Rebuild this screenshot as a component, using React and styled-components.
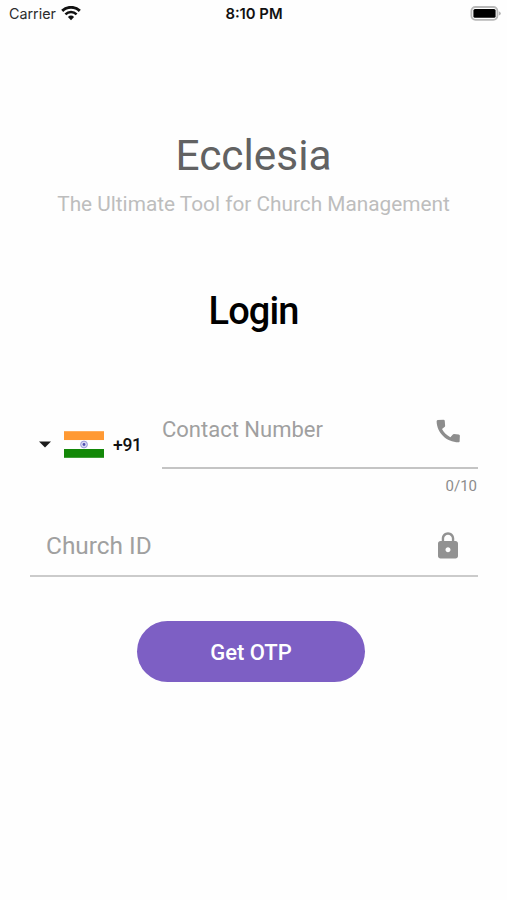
import React from "react";
import styled, { createGlobalStyle } from "styled-components";

export default function App() {
  return (
    <>
      <GlobalStyle />
      <Screen>
        <StatusBar>
          <Carrier>
            <CarrierName>Carrier</CarrierName>
            <WifiIcon />
          </Carrier>
          <Clock>8:10 PM</Clock>
          <BatteryIcon />
        </StatusBar>
        <Title>Ecclesia</Title>
        <Tagline>The Ultimate Tool for Church Management</Tagline>
        <Heading>Login</Heading>
        <Form>
          <PhoneRow>
            <CountryPicker type="button">
              <CaretIcon />
              <IndiaFlag />
              <DialCode>+91</DialCode>
            </CountryPicker>
            <PhoneColumn>
              <PhoneField>
                <Label $size={22}>Contact Number</Label>
                <PhoneIcon />
              </PhoneField>
              <Counter>0/10</Counter>
            </PhoneColumn>
          </PhoneRow>
          <ChurchField>
            <Label $size={24.4}>Church ID</Label>
            <LockIcon />
          </ChurchField>
          <SubmitButton type="button">Get OTP</SubmitButton>
        </Form>
      </Screen>
    </>
  );
}

const WifiIcon = () => (
  <svg width="20" height="15" viewBox="0 0 20 15" fill="none">
    <path d="M1.2 4.9a12.6 12.6 0 0 1 17.6 0" stroke="#111" strokeWidth="2.9" />
    <path d="M4.4 8.4a8 8 0 0 1 11.2 0" stroke="#111" strokeWidth="2.5" />
    <path d="M10 14.2L6.9 11a4.5 4.5 0 0 1 6.2 0z" fill="#111" />
  </svg>
);

const BatteryIcon = () => (
  <svg width="31" height="15" viewBox="0 0 31 15">
    <rect x="1.4" y="1" width="26" height="12.8" rx="4" fill="#fff" stroke="#b8b8b8" strokeWidth="1.8" />
    <rect x="3.4" y="3" width="22.2" height="8.8" rx="1.6" fill="#000" />
    <path d="M28.8 5.2q2 .8 2 2.2t-2 2.2z" fill="#b4b4b4" />
  </svg>
);

const CaretIcon = () => (
  <svg width="12" height="7" viewBox="0 0 12 7">
    <path d="M0 .4h12L6 6.6z" fill="#1c1c1c" />
  </svg>
);

const IndiaFlag = () => (
  <svg width="40" height="27" viewBox="0 0 40 27">
    <rect width="40" height="9" y="0.2" fill="#ff9933" />
    <rect width="40" height="8.8" y="9.2" fill="#fff" />
    <rect width="40" height="8.8" y="18" fill="#138808" />
    <circle cx="20" cy="13.5" r="3.4" fill="#d9d9f4" stroke="#9b9bdc" strokeWidth="1" />
    <circle cx="20" cy="13.5" r="1.4" fill="#5050b0" />
  </svg>
);

const PhoneIcon = () => (
  <svg width="30" height="30" viewBox="0 0 24 24" fill="#8d8d8d">
    <path d="M3.7 3.2L8.4 2.9c.6 0 .9.3 1 .9l.3 3.9c0 .5-.1.8-.5 1.1L7.2 10.4c1.5 3 3.7 5 6.7 6.5l1.8-2c.3-.4.7-.5 1.1-.5l3.8.3c.6.1.9.5.9 1l-.2 4.5c0 .5-.4.8-.9.8C10.8 21 3.1 13.4 2.9 4.2c0-.6.3-.9.8-1z" />
  </svg>
);

const LockIcon = () => (
  <svg width="30" height="30" viewBox="0 0 24 24" fill="#929292">
    <path d="M18 8h-1V6c0-2.76-2.24-5-5-5S7 3.24 7 6v2H6c-1.1 0-2 .9-2 2v10c0 1.1.9 2 2 2h12c1.1 0 2-.9 2-2V10c0-1.1-.9-2-2-2zm-6 9c-1.1 0-2-.9-2-2s.9-2 2-2 2 .9 2 2-.9 2-2 2zm3.1-9H8.9V6c0-1.71 1.39-3.1 3.1-3.1 1.71 0 3.1 1.39 3.1 3.1v2z" />
  </svg>
);

const GlobalStyle = createGlobalStyle`
  * {
    box-sizing: border-box;
  }

  body {
    margin: 0;
    background: #fefefe;
    font-family: Roboto, "Liberation Sans", sans-serif;
  }

  svg {
    display: block;
    flex-shrink: 0;
  }
`;

const Screen = styled.main`
  display: flex;
  flex-direction: column;
  width: 507px;
  height: 900px;
  overflow: hidden;
  white-space: nowrap;
`;

const StatusBar = styled.header`
  display: grid;
  grid-template-columns: 1fr auto 1fr;
  align-items: center;
  height: 26px;
  padding: 0 6px 0 9px;
  font-family: Inter, "Liberation Sans", sans-serif;
  font-size: 14.5px;
  color: #111;

  > svg {
    justify-self: end;
  }
`;

const Carrier = styled.div`
  display: flex;
  align-items: center;
  gap: 5px;
`;

const CarrierName = styled.span`
  padding-top: 1px;
  font-size: 14.3px;
  color: #2c2c2c;
`;

const Clock = styled.span`
  padding: 1px 2px 0 0;
  font-size: 14.8px;
  font-weight: 600;
`;

const Title = styled.h1`
  margin: 104px 0 0;
  font-size: 42.4px;
  font-weight: 400;
  line-height: 52px;
  text-align: center;
  color: #626262;
`;

const Tagline = styled.p`
  margin: 8px 0 0;
  font-size: 20.8px;
  line-height: 28px;
  text-align: center;
  color: #bdbdbd;
`;

const Heading = styled.h2`
  margin: 69px 0 0;
  font-size: 38px;
  font-weight: 500;
  line-height: 48px;
  letter-spacing: -0.9px;
  text-align: center;
  color: #000;
`;

const Form = styled.form`
  display: flex;
  flex-direction: column;
  padding: 57px 29px 0 30px;
`;

const PhoneRow = styled.div`
  display: flex;
  height: 116px;
`;

const CountryPicker = styled.button`
  display: flex;
  align-items: center;
  width: 132px;
  height: 64px;
  margin-top: 20px;
  padding: 0 0 0 9px;
  border: 0;
  background: none;
  font: inherit;
  color: #111;

  svg + svg {
    margin-left: 13px;
  }
`;

const DialCode = styled.span`
  margin-left: 9px;
  padding-top: 1px;
  font-size: 17.5px;
  font-weight: 500;
  line-height: 24px;
  letter-spacing: -0.3px;
`;

const PhoneColumn = styled.div`
  flex: 1;
`;

const Field = styled.div`
  display: flex;
  justify-content: space-between;
  border-bottom: 2px solid #c4c4c4;
`;

const PhoneField = styled(Field)`
  height: 77px;
  padding: 23px 15px 0 0;

  svg {
    margin-top: 1px;
  }
`;

const ChurchField = styled(Field)`
  height: 69px;
  padding: 23px 15px 0 16px;
  border-bottom-color: #cbcbcb;
`;

const Label = styled.label`
  font-size: ${({ $size }) => $size}px;
  line-height: 30px;
  color: #a0a0a0;
`;

const Counter = styled.div`
  padding: 7px 1px 0 0;
  font-size: 15px;
  line-height: 20px;
  text-align: right;
  color: #8c8c8c;
`;

const SubmitButton = styled.button`
  align-self: center;
  width: 228px;
  height: 61px;
  margin: 44px 6px 0 0;
  padding: 2px 6px 0;
  border: 0;
  border-radius: 31px;
  background: #7d5fc4;
  font-family: inherit;
  font-size: 22px;
  font-weight: 500;
  color: #fff;
`;
